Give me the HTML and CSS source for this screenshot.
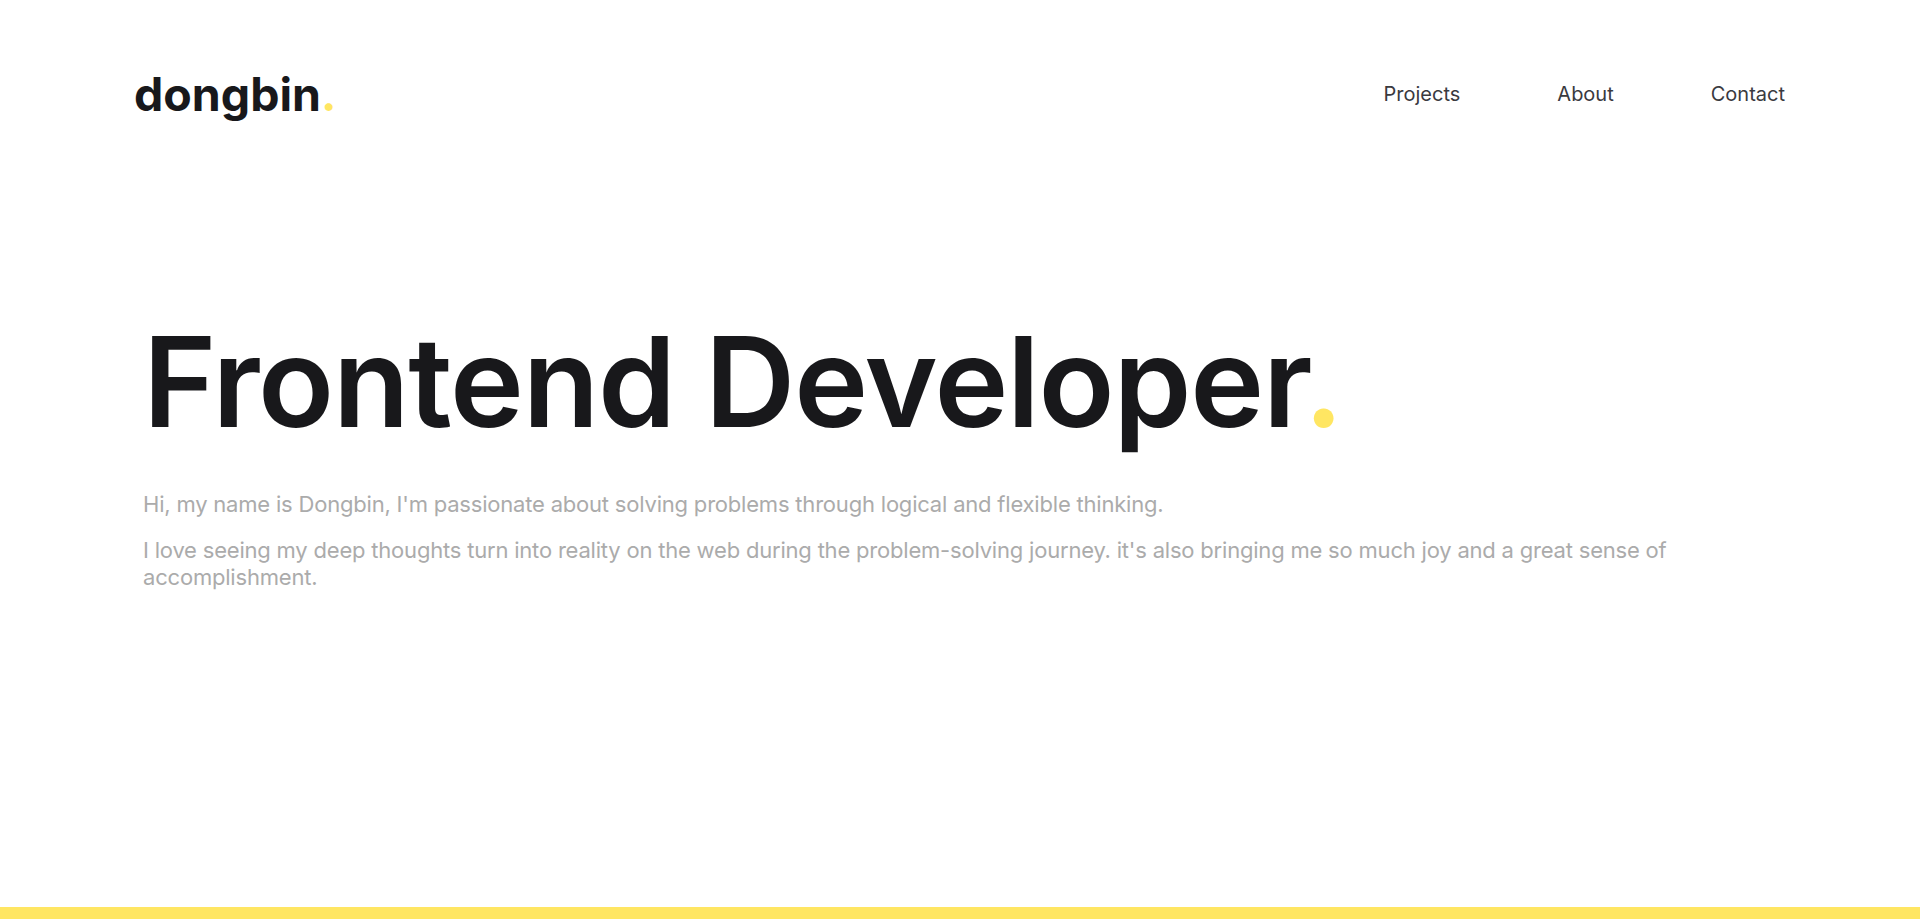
FILE: index.html
```html
<!DOCTYPE html>
<html lang="en">
<head>
<meta charset="utf-8">
<title>dongbin.</title>
<link rel="stylesheet" href="styles.css">
</head>
<body>
<div class="page">
  <header class="header">
    <a class="logo" href="#">dongbin<span class="dot">.</span></a>
    <nav class="nav">
      <a href="#">Projects</a>
      <a href="#">About</a>
      <a href="#">Contact</a>
    </nav>
  </header>
  <main class="hero">
    <h1 class="title">Frontend Developer<span class="dot">.</span></h1>
    <div class="intro">
      <p>Hi, my name is Dongbin, I'm passionate about solving problems through logical and flexible thinking.</p>
      <p>I love seeing my deep thoughts turn into reality on the web during the problem-solving journey. it's also bringing me so much joy and a great sense of accomplishment.</p>
    </div>
  </main>
  <div class="bar"></div>
</div>
</body>
</html>
```
FILE: styles.css
```css
* { box-sizing: border-box; }
html, body { margin: 0; padding: 0; background: #ffffff; }
body { font-family: Inter, "Noto Sans", sans-serif; color: #18181b; }
.page { min-height: 100vh; display: flex; flex-direction: column; }
.header {
  display: flex;
  justify-content: space-between;
  align-items: center;
  padding: 66px 135px 0 134px;
}
.logo {
  font-size: 46.5px;
  font-weight: 700;
  color: #18181b;
  text-decoration: none;
  letter-spacing: 0;
  line-height: 56px;
}
.dot { color: #ffe662; }
.nav { display: flex; gap: 97px; }
.nav a {
  font-size: 20px;
  color: #3a3a3f;
  text-decoration: none;
}
.hero { flex: 1; padding: 185px 135px 0 143px; }
.title {
  margin: 0;
  font-size: 125px;
  font-weight: 600;
  line-height: 1.2;
  letter-spacing: -1.2px;
}
.intro { margin-top: 34px; }
.intro p {
  margin: 0 0 19px;
  font-size: 22px;
  line-height: 27px;
  color: #ababab;
  letter-spacing: -0.2px;
}
.bar { height: 12px; background: #ffe662; }
```
